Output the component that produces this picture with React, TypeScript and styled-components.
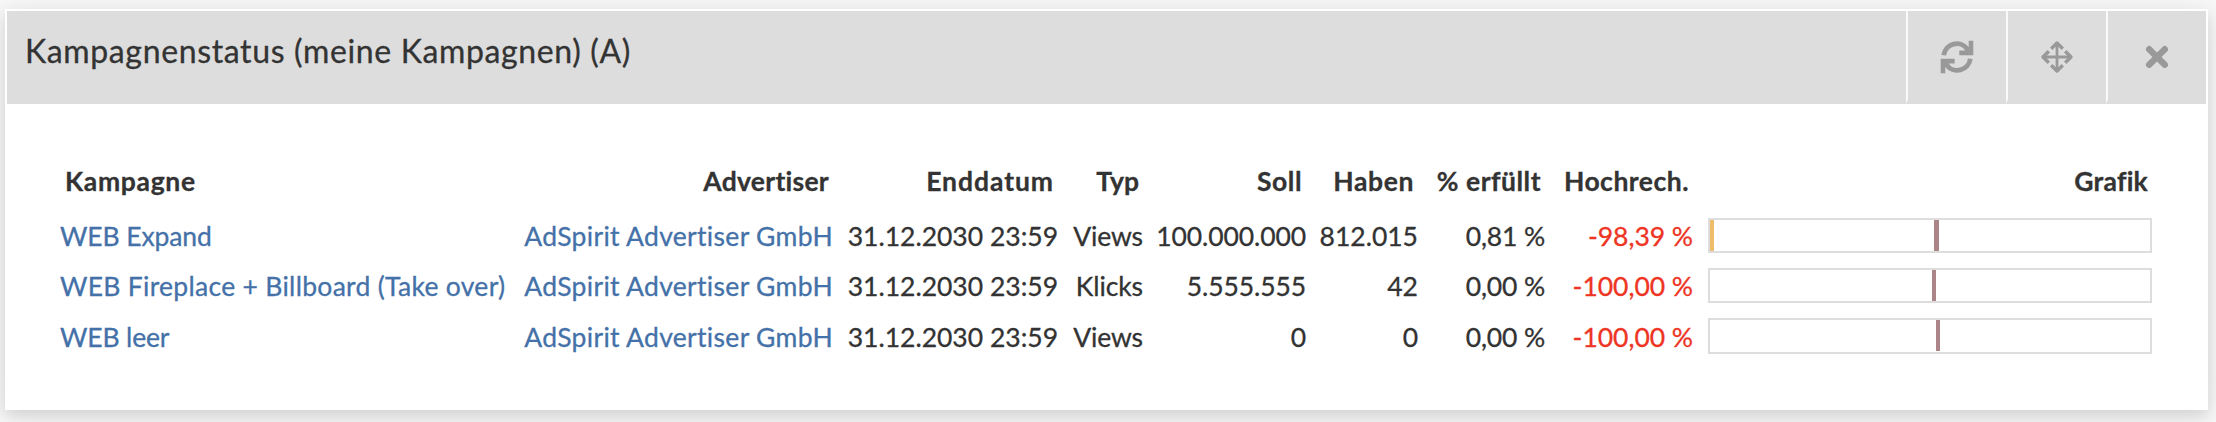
import React from 'react';
import styled, { createGlobalStyle } from 'styled-components';

const GlobalStyle = createGlobalStyle`
  *, *::before, *::after { box-sizing: border-box; }
  html, body { margin: 0; height: 100%; overflow: hidden; }
  body {
    background: #f7f7f7;
    color: #333;
    font-family: Lato, "Open Sans", sans-serif;
    -webkit-text-stroke: 0.3px currentColor;
  }
`;

const Page = styled.main`
  height: 422px;
  padding: 9px 8px 12px 5px;
  overflow: hidden;
`;

const Widget = styled.section`
  height: 401px;
  padding: 2px;
  background: #fff;
  box-shadow: 0 6px 14px rgba(0, 0, 0, 0.12), 0 4px 36px rgba(0, 0, 0, 0.06);
`;

const TitleBar = styled.header`
  display: flex;
  justify-content: space-between;
  height: 93px;
  background: #ddd;
`;

const Title = styled.h1`
  margin: 0;
  padding: 20px 0 0 18px;
  font-size: 32px;
  line-height: 40px;
  font-weight: 400;
  letter-spacing: 0.64px;
`;

const Actions = styled.div`
  display: flex;
`;

const ActionButton = styled.button`
  display: flex;
  align-items: center;
  justify-content: center;
  width: 100px;
  height: 93px;
  padding: 4px 0 0;
  border: 0 solid transparent;
  border-left: 2px solid #fafafa;
  border-bottom: 5px solid transparent;
  background: transparent;
  color: #999;
`;

const Icon = styled.svg`
  display: block;
  width: 34px;
  height: 34px;
`;

const Table = styled.div`
  padding: 52px 54px 0 53px;
`;

const Row = styled.div<{ $offset?: number }>`
  display: grid;
  grid-template-columns: 460px 313px 225px 85px 163px 112px 127px 148px 459px;
  height: 50px;
  font-size: 26.5px;
  line-height: ${(p) => 50 + (p.$offset ?? 0) * 2}px;
  white-space: nowrap;
`;

const HeadRow = styled(Row)`
  height: 55px;
  font-weight: 700;
`;

const HeadCell = styled.div<{ $tracking: number; $start?: boolean }>`
  padding: 0 4px 0 5px;
  letter-spacing: ${(p) => p.$tracking}px;
  text-align: ${(p) => (p.$start ? 'left' : 'right')};
`;

const Cell = styled.div<{ $tracking?: number; $negative?: boolean }>`
  color: ${(p) => (p.$negative ? '#ee3524' : 'inherit')};
  letter-spacing: ${(p) => p.$tracking ?? 0}px;
  text-align: right;
`;

const LinkCell = styled(Cell)<{ $start?: boolean }>`
  color: #4471a8;
  text-align: ${(p) => (p.$start ? 'left' : 'right')};
`;

const ChartCell = styled.div`
  padding: 7px 0 0 15px;
`;

const Track = styled.div<{ $height: number }>`
  display: flex;
  align-items: flex-start;
  height: ${(p) => p.$height}px;
  border: 2px solid #ddd;
`;

const Progress = styled.div`
  height: 31px;
  background: #efbd6a;
`;

const Marker = styled.div`
  height: 31px;
  background: #ab8488;
`;

type Campaign = {
  name: string;
  nameTracking: number;
  type: string;
  target: string;
  actual: string;
  fulfilled: string;
  forecast: string;
  progress: number;
  marker: number;
  markerWidth: number;
  trackHeight: number;
};

const campaigns: Campaign[] = [
  { name: 'WEB Expand', nameTracking: -0.11, type: 'Views', target: '100.000.000', actual: '812.015', fulfilled: '0,81 %', forecast: '-98,39 %', progress: 4, marker: 224, markerWidth: 5, trackHeight: 35 },
  { name: 'WEB Fireplace + Billboard (Take over)', nameTracking: 0.29, type: 'Klicks', target: '5.555.555', actual: '42', fulfilled: '0,00 %', forecast: '-100,00 %', progress: 0, marker: 222, markerWidth: 4, trackHeight: 35 },
  { name: 'WEB leer', nameTracking: -0.15, type: 'Views', target: '0', actual: '0', fulfilled: '0,00 %', forecast: '-100,00 %', progress: 0, marker: 226, markerWidth: 4, trackHeight: 36 },
];

const headings: [string, number][] = [
  ['Kampagne', 0.68],
  ['Advertiser', 0.26],
  ['Enddatum', 0.95],
  ['Typ', 0.03],
  ['Soll', 0.5],
  ['Haben', 0.6],
  ['% erfüllt', 0.5],
  ['Hochrech.', 0.5],
  ['Grafik', 0.22],
];

const RefreshIcon = () => (
  <Icon viewBox="0 0 34 34" fill="currentColor">
    <path d="M3.7 15.2A13.2 13.2 0 0 1 27.5 9.2M30.3 18.8A13.2 13.2 0 0 1 6.5 24.8" fill="none" stroke="currentColor" strokeWidth="4.8" />
    <path d="M28.7.7h4.6v14.5h-14v-4.7h6.2l-2-2.2 3-3 2.2 2.2z" />
    <path d="M5.3 33.3H.7V18.8h14v4.7H8.5l2 2.2-3 3-2.2-2.2z" />
  </Icon>
);

const MoveIcon = () => (
  <Icon viewBox="0 0 34 34" fill="none" stroke="currentColor" strokeWidth="3.4">
    <path d="M17 3v28M3 17h28" strokeWidth="2.8" />
    <path d="M11.2 8.8 17 3l5.8 5.8M11.2 25.2 17 31l5.8-5.8M8.8 11.2 3 17l5.8 5.8M25.2 11.2 31 17l-5.8 5.8" strokeLinejoin="round" />
  </Icon>
);

const CloseIcon = () => (
  <Icon viewBox="0 0 34 34" fill="none" stroke="currentColor" strokeWidth="6.4" strokeLinecap="round">
    <path d="m9.2 9.2 15.6 15.6M24.8 9.2 9.2 24.8" />
  </Icon>
);

export default function App() {
  return (
    <Page>
      <GlobalStyle />
      <Widget>
        <TitleBar>
          <Title>Kampagnenstatus (meine Kampagnen) (A)</Title>
          <Actions>
            <ActionButton aria-label="Aktualisieren"><RefreshIcon /></ActionButton>
            <ActionButton aria-label="Verschieben"><MoveIcon /></ActionButton>
            <ActionButton aria-label="Schließen"><CloseIcon /></ActionButton>
          </Actions>
        </TitleBar>
        <Table>
          <HeadRow>
            {headings.map(([label, tracking], i) => (
              <HeadCell key={label} $tracking={tracking} $start={i === 0}>{label}</HeadCell>
            ))}
          </HeadRow>
          {campaigns.map((c, i) => (
            <Row key={c.name} $offset={i === 2 ? 1 : 0}>
              <LinkCell $start $tracking={c.nameTracking}>{c.name}</LinkCell>
              <LinkCell $tracking={0.31}>AdSpirit Advertiser GmbH</LinkCell>
              <Cell>31.12.2030 23:59</Cell>
              <Cell $tracking={-0.1}>{c.type}</Cell>
              <Cell $tracking={-0.1}>{c.target}</Cell>
              <Cell>{c.actual}</Cell>
              <Cell $tracking={-0.15}>{c.fulfilled}</Cell>
              <Cell $tracking={-0.04} $negative>{c.forecast}</Cell>
              <ChartCell>
                <Track $height={c.trackHeight}>
                  {c.progress > 0 && <Progress style={{ width: c.progress }} />}
                  <Marker style={{ width: c.markerWidth, marginLeft: c.marker - c.progress }} />
                </Track>
              </ChartCell>
            </Row>
          ))}
        </Table>
      </Widget>
    </Page>
  );
}
